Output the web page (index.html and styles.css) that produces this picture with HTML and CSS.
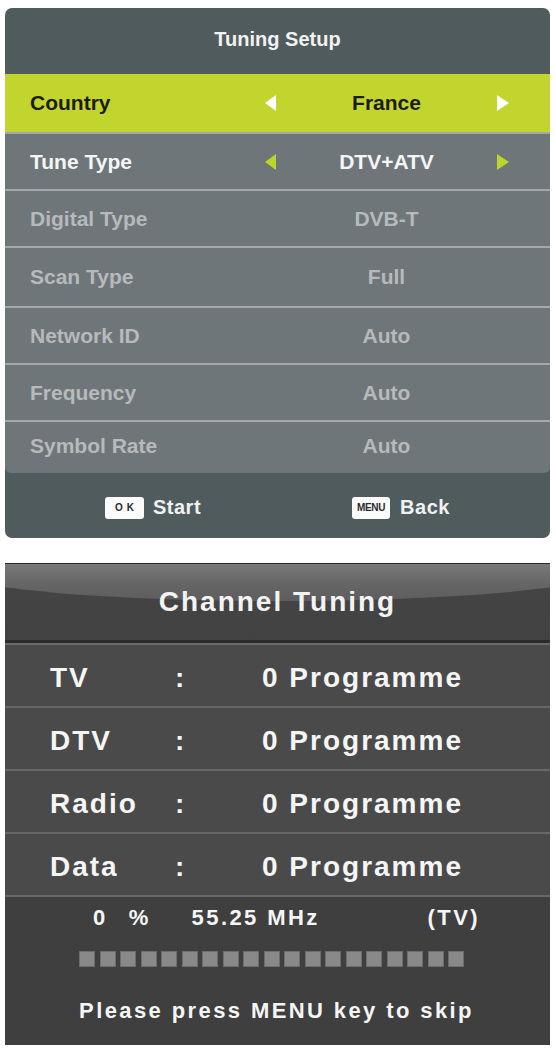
FILE: index.html
```html
<!DOCTYPE html>
<html lang="en">
<head>
<meta charset="utf-8">
<title>Tuning</title>
<link rel="stylesheet" href="styles.css">
</head>
<body>
<div class="page">
  <section class="setup">
    <div class="setup-title">Tuning Setup</div>
    <div class="setup-list">
      <div class="row row-active">
        <span class="label">Country</span>
        <span class="arrow arrow-left"></span>
        <span class="value">France</span>
        <span class="arrow arrow-right"></span>
      </div>
      <div class="row row-enabled">
        <span class="label">Tune Type</span>
        <span class="arrow arrow-left"></span>
        <span class="value">DTV+ATV</span>
        <span class="arrow arrow-right"></span>
      </div>
      <div class="row row-disabled">
        <span class="label">Digital Type</span>
        <span></span>
        <span class="value">DVB-T</span>
      </div>
      <div class="row row-disabled">
        <span class="label">Scan Type</span>
        <span></span>
        <span class="value">Full</span>
      </div>
      <div class="row row-disabled">
        <span class="label">Network ID</span>
        <span></span>
        <span class="value">Auto</span>
      </div>
      <div class="row row-disabled">
        <span class="label">Frequency</span>
        <span></span>
        <span class="value">Auto</span>
      </div>
      <div class="row row-disabled">
        <span class="label">Symbol Rate</span>
        <span></span>
        <span class="value">Auto</span>
      </div>
    </div>
    <div class="setup-footer">
      <div class="hint-group"><span class="key key-ok">OK</span><span class="hint-text">Start</span></div>
      <div class="hint-group hint-back"><span class="key key-menu">MENU</span><span class="hint-text">Back</span></div>
    </div>
  </section>

  <section class="tuning">
    <div class="tuning-title"><span class="tuning-title-text">Channel Tuning</span></div>
    <div class="tuning-rows">
      <div class="trow"><span>TV</span><span>:</span><span>0 Programme</span></div>
      <div class="trow"><span>DTV</span><span>:</span><span>0 Programme</span></div>
      <div class="trow"><span>Radio</span><span>:</span><span>0 Programme</span></div>
      <div class="trow"><span>Data</span><span>:</span><span>0 Programme</span></div>
    </div>
    <div class="tuning-status">
      <div class="status-line">
        <span class="pct">0</span><span class="pct-sign">%</span>
        <span class="freq">55.25 MHz</span>
        <span class="type">(TV)</span>
      </div>
      <div class="progress">
        <span class="block"></span><span class="block"></span><span class="block"></span><span class="block"></span><span class="block"></span>
        <span class="block"></span><span class="block"></span><span class="block"></span><span class="block"></span><span class="block"></span>
        <span class="block"></span><span class="block"></span><span class="block"></span><span class="block"></span><span class="block"></span>
        <span class="block"></span><span class="block"></span><span class="block"></span><span class="block"></span>
      </div>
      <div class="skip">Please press MENU key to skip</div>
    </div>
  </section>
</div>
</body>
</html>
```

FILE: styles.css
```css
* { box-sizing: border-box; }

html, body {
  margin: 0;
  padding: 0;
  background: #ffffff;
}

body {
  font-family: "Liberation Sans", Arial, sans-serif;
  font-weight: bold;
}

.page {
  padding: 8px 6px 0 5px;
  display: flex;
  flex-direction: column;
  gap: 25px;
}

/* ---------- Tuning Setup ---------- */
.setup {
  width: 545px;
  background: #505b5e;
  border-radius: 7px;
  overflow: hidden;
}

.setup-title {
  height: 66px;
  display: flex;
  align-items: center;
  justify-content: center;
  padding-bottom: 4px;
  color: #f2f2f2;
  font-size: 20px;
}

.setup-list {
  background: #6f7679;
  border-radius: 0 0 6px 6px;
  overflow: hidden;
}

.row {
  height: 57px;
  display: grid;
  grid-template-columns: 235px 11px 1fr 12px;
  align-items: center;
  padding: 0 41px 0 25px;
  font-size: 21px;
  border-top: 2px solid #a2a8aa;
}

.row:nth-child(1) { height: 58px; border-top: none; }
.row:nth-child(4) { height: 60px; }
.row:nth-child(7) { height: 53px; padding-bottom: 3px; }

.row-active {
  background: #c2d52f;
  color: #1b1d14;
}

.row-enabled { color: #f4f5f5; }
.row-disabled { color: #b6babc; }

.value {
  text-align: center;
}

.arrow {
  width: 0;
  height: 0;
  border-top: 8px solid transparent;
  border-bottom: 8px solid transparent;
}

.arrow-left { border-right: 11px solid #ffffff; }
.arrow-right { border-left: 12px solid #ffffff; }

.row-enabled .arrow-left { border-right-color: #bcd42b; }
.row-enabled .arrow-right { border-left-color: #bcd42b; }

.setup-footer {
  height: 65px;
  display: flex;
  align-items: center;
  padding-left: 100px;
  padding-top: 4px;
}

.hint-group {
  display: flex;
  align-items: center;
  gap: 9px;
}

.hint-back {
  margin-left: 151px;
  gap: 10px;
}

.hint-text {
  color: #f0f1f1;
  font-size: 20px;
  letter-spacing: 0.5px;
}

.key {
  height: 22px;
  background: #fbfbfb;
  border-radius: 3px;
  color: #2a2a2a;
  display: flex;
  align-items: center;
  justify-content: center;
}

.key-ok {
  width: 39px;
  font-size: 10px;
  letter-spacing: 4px;
  padding-left: 4px;
}

.key-menu {
  width: 38px;
  font-size: 10px;
  letter-spacing: -0.3px;
}

/* ---------- Channel Tuning ---------- */
.tuning {
  width: 545px;
  height: 482px;
  background: #3f3f3f;
  border-top: 1px solid #2a2a2a;
  display: flex;
  flex-direction: column;
}

.tuning-title {
  position: relative;
  height: 79px;
  background: linear-gradient(#454545, #424242);
  border-bottom: 3px solid #2b2b2b;
  overflow: hidden;
  display: flex;
  align-items: center;
  justify-content: center;
}

.tuning-title::before {
  content: "";
  position: absolute;
  left: -47px;
  top: -21px;
  width: 640px;
  height: 58px;
  border-radius: 50%;
  background: linear-gradient(#7c7c7c 30%, #666666 70%, #5d5d5d);
}

.tuning-title-text {
  position: relative;
  color: #f3f3f3;
  font-size: 28px;
  letter-spacing: 2px;
}

.tuning-rows {
  border-top: 2px solid #6b6b6b;
  background: #4a4a4a;
}

.trow {
  height: 63px;
  display: grid;
  grid-template-columns: 125px 87px 1fr;
  align-items: center;
  padding: 5px 0 0 45px;
  border-bottom: 2px solid #686868;
  color: #f5f5f5;
  font-size: 28px;
  letter-spacing: 2px;
}

.tuning-status {
  flex: 1;
  display: flex;
  flex-direction: column;
  padding-top: 9px;
  color: #f5f5f5;
  font-size: 22px;
  letter-spacing: 2.4px;
}

.status-line {
  height: 24px;
  display: flex;
  align-items: center;
  padding-left: 88px;
}

.pct-sign { margin-left: 21px; }
.freq { margin-left: 41px; }
.type { margin-left: 108px; }

.progress {
  margin-top: 21px;
  padding-left: 74px;
  display: flex;
  gap: 4.5px;
}

.block {
  width: 16px;
  height: 16px;
  background: #898989;
  border: 1px solid #6d6d6d;
}

.skip {
  margin-top: 32px;
  height: 24px;
  display: flex;
  align-items: center;
  justify-content: center;
  padding-right: 2px;
}
```
